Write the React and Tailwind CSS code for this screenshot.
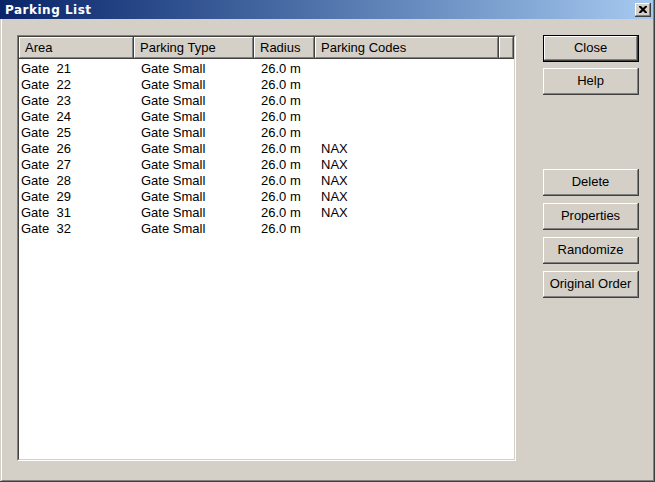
import React from "react";

const rows = [
  ["Gate  21", "Gate Small", "26.0 m", ""],
  ["Gate  22", "Gate Small", "26.0 m", ""],
  ["Gate  23", "Gate Small", "26.0 m", ""],
  ["Gate  24", "Gate Small", "26.0 m", ""],
  ["Gate  25", "Gate Small", "26.0 m", ""],
  ["Gate  26", "Gate Small", "26.0 m", "NAX"],
  ["Gate  27", "Gate Small", "26.0 m", "NAX"],
  ["Gate  28", "Gate Small", "26.0 m", "NAX"],
  ["Gate  29", "Gate Small", "26.0 m", "NAX"],
  ["Gate  31", "Gate Small", "26.0 m", "NAX"],
  ["Gate  32", "Gate Small", "26.0 m", ""],
];

const cols = [
  { name: "Area", w: "w-[115px]" },
  { name: "Parking Type", w: "w-[120px]" },
  { name: "Radius", w: "w-[61px]" },
  { name: "Parking Codes", w: "w-[184px]" },
];

function HeaderCell({ children, w }) {
  return (
    <div className={`${w} shrink-0 h-full border-r border-b border-[#404040]`}>
      <div className="h-full border-t border-l border-white border-r border-b border-r-[#808080] border-b-[#808080] bg-[#d4d0c8] pl-[5px] flex items-center whitespace-nowrap overflow-hidden">
        {children}
      </div>
    </div>
  );
}

function Btn({ children, def }) {
  const inner = (
    <div className="h-full w-full border-r border-b border-[#404040]">
      <div className="h-full w-full border-t border-l border-white border-r border-b border-r-[#808080] border-b-[#808080] flex items-center justify-center text-[13px] text-black">
        {children}
      </div>
    </div>
  );
  if (def) {
    return <div className="w-[96px] h-[27px] border border-black">{inner}</div>;
  }
  return <div className="w-[96px] h-[27px]">{inner}</div>;
}

export default function App() {
  return (
    <div
      className="w-[655px] h-[482px] bg-[#d4d0c8] overflow-hidden flex flex-col border-r border-b border-[#404040]"
      style={{ fontFamily: '"Liberation Sans", Arial, sans-serif' }}
    >
      <div className="flex-1 flex flex-col border-l border-white border-r border-b border-r-[#808080] border-b-[#808080] ml-px">
        <div className="h-[19px] shrink-0 flex items-center justify-between pl-[5px] pr-[2px] bg-gradient-to-r from-[#0a246a] to-[#a6caf0] -ml-[2px]">
          <span
            className="text-white font-bold text-[12px] leading-none tracking-[0.5px]"
            style={{ fontFamily: '"DejaVu Sans", Verdana, sans-serif' }}
          >
            Parking List
          </span>
          <div className="w-[16px] h-[14px] border-r border-b border-[#404040]">
            <div className="w-full h-full border-t border-l border-white border-r border-b border-r-[#808080] border-b-[#808080] bg-[#d4d0c8] flex items-center justify-center">
              <svg width="8" height="7" viewBox="0 0 8 7">
                <path d="M0 0h2l2 2 2-2h2v1l-2.5 2.5L8 6v1H6L4 5 2 7H0V6l2.5-2.5L0 1z" fill="#000" />
              </svg>
            </div>
          </div>
        </div>
        <div className="flex-1 flex pl-[15px] pt-[16px]">
          <div className="w-[499px] h-[426px] border-t border-l border-[#808080] border-r border-b border-r-white border-b-white">
            <div className="w-full h-full border-t border-l border-[#404040] border-r border-b border-r-[#d4d0c8] border-b-[#d4d0c8] bg-white flex flex-col">
              <div className="h-[22px] flex shrink-0 text-[13px] text-black">
                {cols.map((c) => (
                  <HeaderCell key={c.name} w={c.w}>
                    {c.name}
                  </HeaderCell>
                ))}
                <HeaderCell w="w-[15px]"></HeaderCell>
              </div>
              <div className="flex flex-col text-[13px] text-black pt-[2px]">
                {rows.map((r, i) => (
                  <div key={i} className="h-[16px] flex items-center whitespace-pre">
                    <div className="w-[115px] pl-[2px]">{r[0]}</div>
                    <div className="w-[120px] pl-[7px]">{r[1]}</div>
                    <div className="w-[61px] pl-[7px]">{r[2]}</div>
                    <div className="w-[184px] pl-[6px]">{r[3]}</div>
                  </div>
                ))}
              </div>
            </div>
          </div>
          <div className="ml-[27px] flex flex-col">
            <Btn def>Close</Btn>
            <div className="mt-[6px]">
              <Btn>Help</Btn>
            </div>
            <div className="mt-[74px] flex flex-col gap-[7px]">
              <Btn>Delete</Btn>
              <Btn>Properties</Btn>
              <Btn>Randomize</Btn>
              <Btn>Original Order</Btn>
            </div>
          </div>
        </div>
      </div>
    </div>
  );
}
